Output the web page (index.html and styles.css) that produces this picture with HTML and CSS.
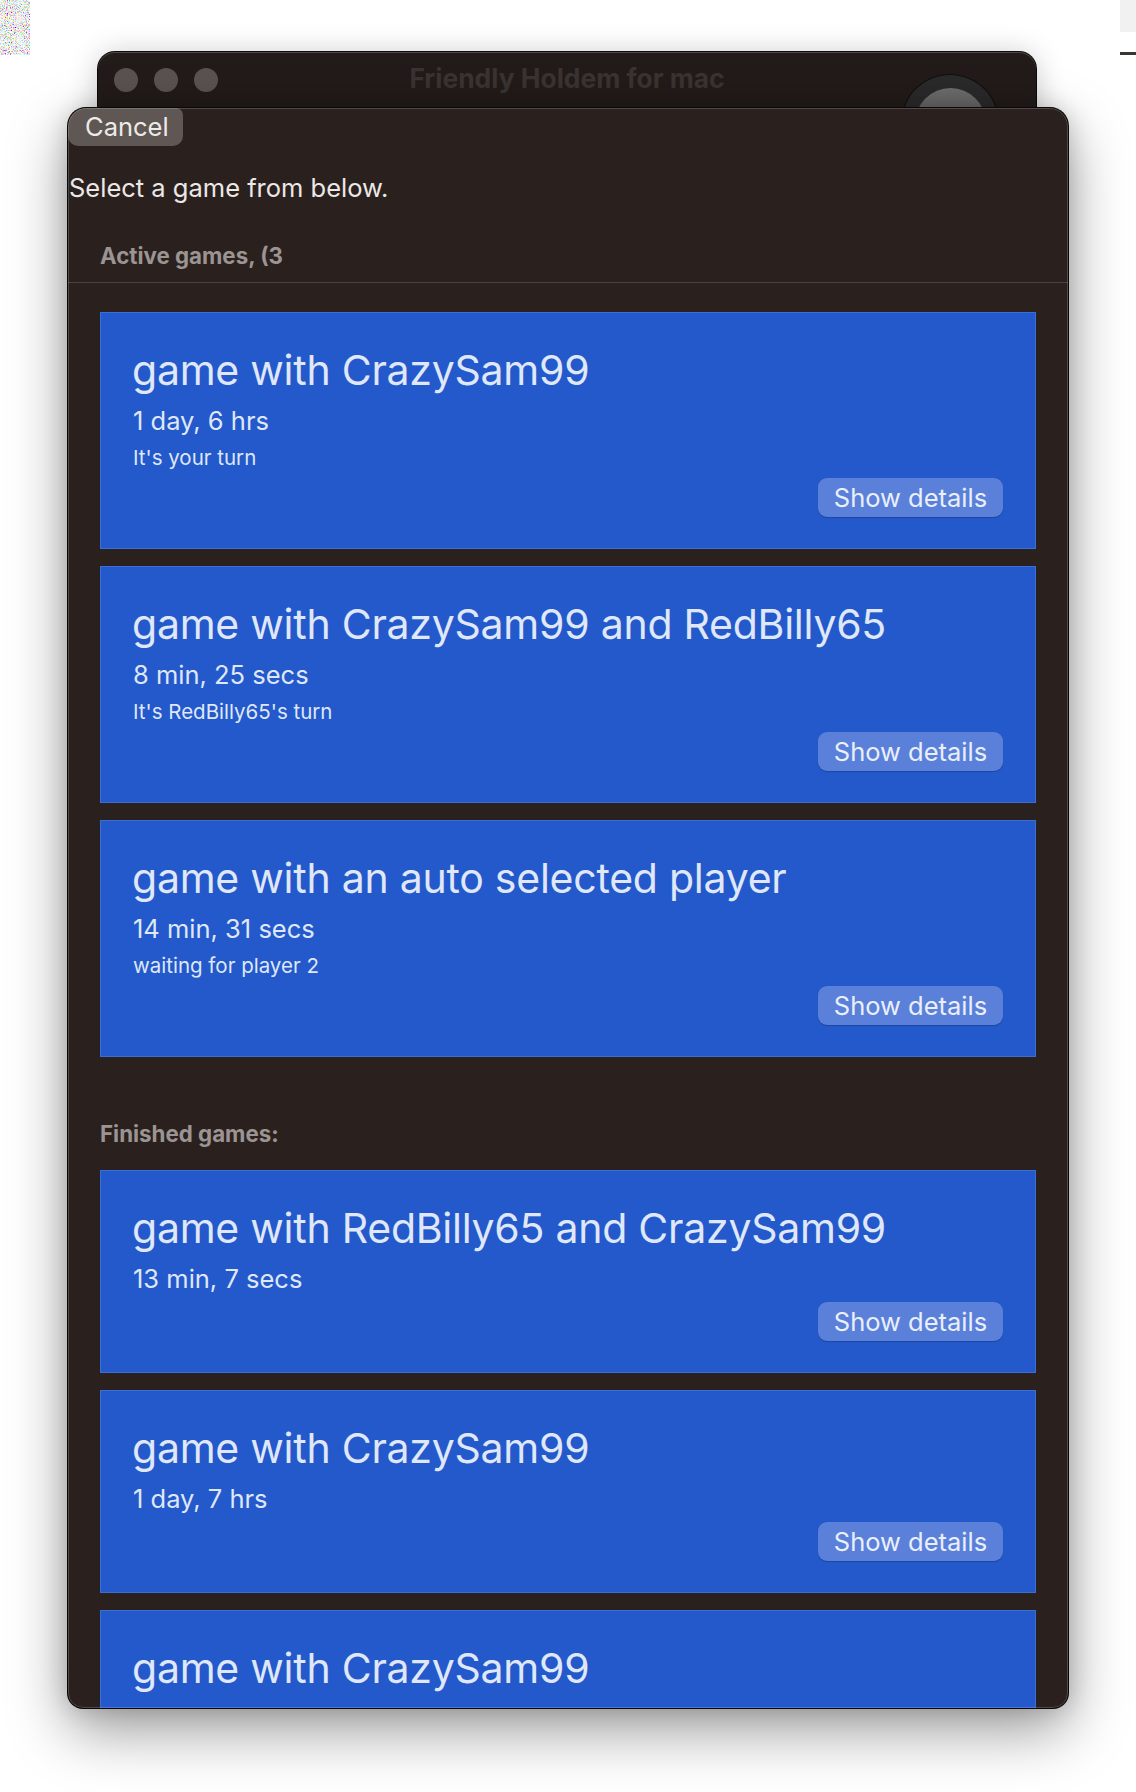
FILE: index.html
```html
<!DOCTYPE html>
<html lang="en">
<head>
<meta charset="utf-8">
<title>Friendly Holdem for mac</title>
<link rel="stylesheet" href="styles.css">
</head>
<body>
<div class="desktop">
  <svg class="noise" width="30" height="55" viewBox="0 0 30 55" aria-hidden="true">
    <filter id="nz" x="0" y="0" width="1" height="1">
      <feTurbulence type="fractalNoise" baseFrequency="0.95" numOctaves="3" seed="7"/>
      <feComponentTransfer>
        <feFuncR type="linear" slope="3" intercept="-0.6"/>
        <feFuncG type="linear" slope="3" intercept="-0.6"/>
        <feFuncB type="linear" slope="3" intercept="-0.6"/>
        <feFuncA type="linear" slope="0" intercept="1"/>
      </feComponentTransfer>
    </filter>
    <rect width="30" height="55" filter="url(#nz)"/>
  </svg>
  <div class="corner-mark"></div>

  <div class="back-window">
    <div class="back-header">
      <div class="lights">
        <span class="light"></span>
        <span class="light"></span>
        <span class="light"></span>
      </div>
      <div class="back-title">Friendly Holdem for mac</div>
      <div></div>
    </div>
    <div class="disc"><div class="disc-inner"></div></div>
  </div>

  <div class="sheet">
    <button class="cancel">Cancel</button>
    <p class="prompt">Select a game from below.</p>
    <h2 class="section-label">Active games, (3</h2>
    <hr class="divider">
    <div class="list">
      <div class="card">
        <h3 class="card-title">game with CrazySam99</h3>
        <div class="card-time">1 day, 6 hrs</div>
        <div class="card-status">It's your turn</div>
        <button class="details">Show details</button>
      </div>
      <div class="card">
        <h3 class="card-title">game with CrazySam99 and RedBilly65</h3>
        <div class="card-time">8 min, 25 secs</div>
        <div class="card-status">It's RedBilly65's turn</div>
        <button class="details">Show details</button>
      </div>
      <div class="card">
        <h3 class="card-title">game with an auto selected player</h3>
        <div class="card-time">14 min, 31 secs</div>
        <div class="card-status">waiting for player 2</div>
        <button class="details">Show details</button>
      </div>
    </div>
    <h2 class="section-label finished-label">Finished games:</h2>
    <div class="list list-finished">
      <div class="card">
        <h3 class="card-title">game with RedBilly65 and CrazySam99</h3>
        <div class="card-time">13 min, 7 secs</div>
        <button class="details">Show details</button>
      </div>
      <div class="card">
        <h3 class="card-title">game with CrazySam99</h3>
        <div class="card-time">1 day, 7 hrs</div>
        <button class="details">Show details</button>
      </div>
      <div class="card card-last">
        <h3 class="card-title">game with CrazySam99</h3>
      </div>
    </div>
  </div>
</div>
</body>
</html>
```
FILE: styles.css
```css
* { box-sizing: border-box; }

body {
  margin: 0;
  background: #ffffff;
  font-family: Inter, "Noto Sans", "Liberation Sans", sans-serif;
}

.desktop {
  position: relative;
  width: 1136px;
  height: 1792px;
  overflow: hidden;
  background: #ffffff;
}

.noise {
  position: absolute;
  left: 0;
  top: 0;
  display: block;
}

.corner-mark {
  position: absolute;
  left: 1120px;
  top: 0;
  width: 16px;
  height: 55px;
  background: linear-gradient(#f1f1f1 0 32px, #ffffff 32px 52px, #3a3432 52px 55px);
}

/* back (main) window */
.back-window {
  position: absolute;
  left: 98px;
  top: 52px;
  width: 938px;
  height: 240px;
  background: #221b19;
  border-radius: 17px;
  box-shadow: inset 0 1px 0 rgba(255, 255, 255, 0.2), 0 0 0 1px #0c0908, 0 2px 30px rgba(0, 0, 0, 0.22);
}

.back-header {
  display: grid;
  grid-template-columns: 1fr auto 1fr;
  align-items: center;
  height: 56px;
  padding: 0 16px;
}

.lights {
  display: flex;
  gap: 16px;
}

.light {
  width: 24px;
  height: 24px;
  border-radius: 50%;
  background: #5a5250;
}

.back-title {
  font-size: 26.4px;
  font-weight: 700;
  color: #3a3331;
  margin-bottom: 4px;
}

.disc {
  position: absolute;
  left: 804px;
  top: 23px;
  width: 96px;
  height: 96px;
  border-radius: 50%;
  background: #2b2a2a;
  box-shadow: 0 0 0 1px #111010;
  display: flex;
  align-items: center;
  justify-content: center;
}

.disc-inner {
  width: 71px;
  height: 71px;
  border-radius: 50%;
  background: linear-gradient(#6e6e6e, #4d4d4d);
}

/* sheet */
.sheet {
  position: absolute;
  left: 68px;
  top: 108px;
  width: 1000px;
  height: 1600px;
  background: #2a211f;
  border-radius: 18px 18px 15px 15px;
  overflow: hidden;
  box-shadow: 0 0 0 1px #0a0707, 0 22px 60px rgba(0, 0, 0, 0.4), 0 0 24px rgba(0, 0, 0, 0.18);
}

.sheet::after {
  content: "";
  position: absolute;
  inset: 0;
  border-radius: inherit;
  border: 1px solid rgba(255, 255, 255, 0.18);
  pointer-events: none;
}

.cancel {
  display: block;
  width: 115px;
  height: 38px;
  margin: 0;
  padding: 0 0 0 17px;
  text-align: left;
  border: 0;
  background: #5e5754;
  color: #eeeae8;
  font-family: Inter, "Noto Sans", sans-serif;
  font-size: 25.5px;
  line-height: 38px;
  border-radius: 18px 7px 10px 10px;
}

.prompt {
  margin: 26px 0 0;
  padding-left: 1px;
  font-size: 25.5px;
  line-height: 32px;
  color: #ece8e6;
}

.section-label {
  margin: 38px 0 0;
  padding-left: 32px;
  font-size: 22.3px;
  line-height: 27px;
  font-weight: 700;
  color: #9c9492;
}

.divider {
  margin: 13px 0 0;
  border: 0;
  height: 1px;
  background: #4a4341;
}

.list {
  display: flex;
  flex-direction: column;
  gap: 17px;
  padding: 0 32px;
  margin-top: 29px;
}

.finished-label {
  margin-top: 63px;
}

.list-finished {
  margin-top: 23px;
}

.card {
  display: flex;
  flex-direction: column;
  background: #2459cb;
  border: 1px solid #3d6dd6;
  padding: 32px 32px 31px;
  color: #dfe7f8;
}

.card-last {
  min-height: 203px;
}

.card-title {
  margin: 0 0 0 -1px;
  font-size: 41px;
  line-height: 50px;
  font-weight: 400;
  letter-spacing: -0.25px;
}

.card-time {
  margin-top: 11px;
  font-size: 25.5px;
  line-height: 30px;
}

.card-status {
  margin-top: 10px;
  font-size: 20.5px;
  line-height: 24px;
}

.details {
  align-self: flex-end;
  margin-top: 8px;
  width: 185px;
  height: 39px;
  padding: 0;
  border: 0;
  border-radius: 9px;
  background: #5b80d9;
  color: #e9effb;
  font-family: Inter, "Noto Sans", sans-serif;
  font-size: 25.5px;
  box-shadow: 0 1px 1px rgba(0, 0, 0, 0.22);
}
```
